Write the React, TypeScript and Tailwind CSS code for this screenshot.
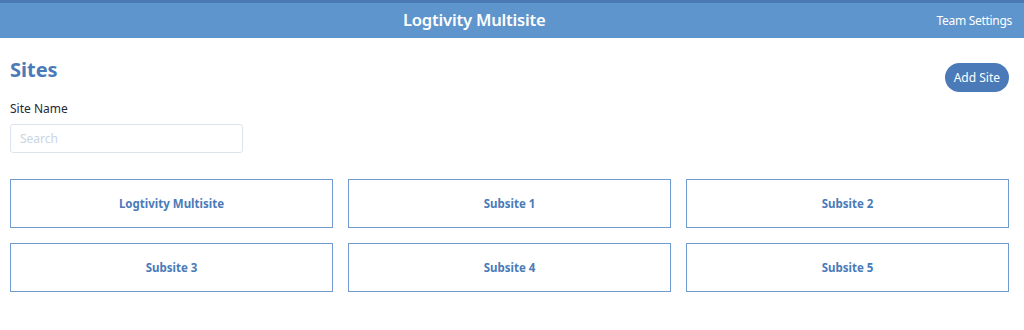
import React from "react";

const sites = ["Logtivity Multisite", "Subsite 1", "Subsite 2", "Subsite 3", "Subsite 4", "Subsite 5"];

export default function App() {
  return (
    <div className="w-[1024px] h-[330px] bg-white" style={{ fontFamily: '"Noto Sans", "Open Sans", sans-serif' }}>
      <div className="h-[3px] bg-[#4a79b4]" />
      <header className="h-[35px] bg-[#5e95cd] flex items-center">
        <h1 className="flex-1 pl-[12px] text-center text-[16.6px] font-semibold text-white tracking-[-0.2px]">Logtivity Multisite</h1>
        <a className="pr-[12px] text-[12px] text-white tracking-[-0.3px]">Team Settings</a>
      </header>
      <main className="pl-[10px] pr-[15px]">
        <div className="flex justify-between items-start">
          <div>
            <h2 className="mt-[19px] text-[20px] leading-[26px] font-bold text-[#4a7ab8]">Sites</h2>
            <label className="block mt-[18px] text-[12px] leading-[16px] text-[#1f2937]">Site Name</label>
            <input
              placeholder="Search"
              className="mt-[7px] w-[233px] h-[29px] px-[9px] text-[12px] rounded-[3px] border border-[#dbe4ee] placeholder:text-[#c9d5e3] outline-none"
            />
          </div>
          <button className="mt-[25px] h-[29px] px-[9px] rounded-full bg-[#4a7ab8] text-white text-[12px]">Add Site</button>
        </div>
        <div className="mt-[26px] grid grid-cols-3 gap-x-[15px] gap-y-[15px]">
          {sites.map((s) => (
            <div key={s} className="h-[49px] border border-[#6f9bd0] flex items-center justify-center">
              <span className="text-[11.5px] font-bold text-[#4a7ab8]">{s}</span>
            </div>
          ))}
        </div>
      </main>
    </div>
  );
}
